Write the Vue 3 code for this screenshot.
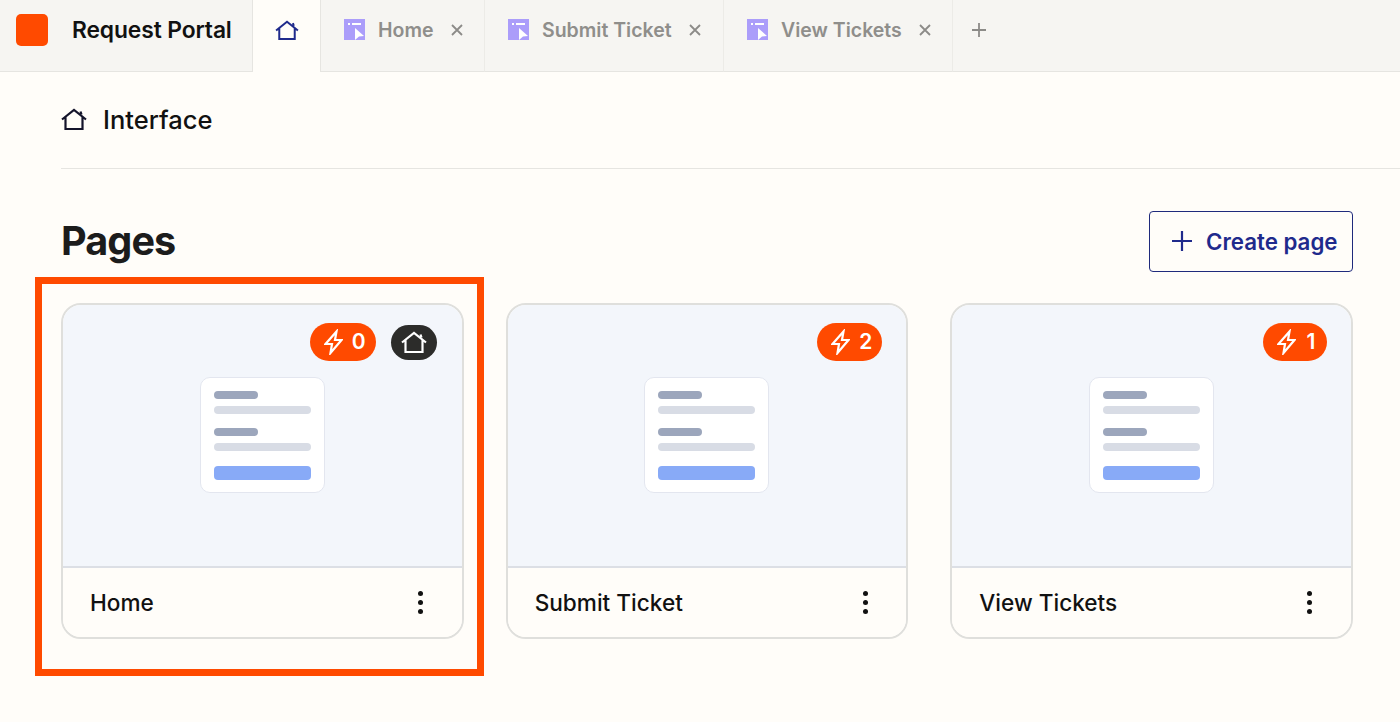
<script setup>
const tabs = [
  { name: 'Home', w: 164 },
  { name: 'Submit Ticket', w: 239 },
  { name: 'View Tickets', w: 229 },
]
const pages = [
  { name: 'Home', runs: 0, home: true },
  { name: 'Submit Ticket', runs: 2, home: false },
  { name: 'View Tickets', runs: 1, home: false },
]
const housePath = 'M1 11.5 L13 2 L25 11.5 M4.5 9 V21 H21.5 V9 M19.5 3.5 L20.5 6.5'
</script>

<template>
  <div class="app">
    <header class="tabbar">
      <div class="brand">
        <span class="logo"></span>
        <span class="brand-name">Request Portal</span>
      </div>
      <div class="tab-active">
        <svg width="24" height="20" viewBox="0 0 26 22" fill="none" stroke="#1f2a8c" stroke-width="2.2">
          <path :d="housePath" />
        </svg>
      </div>
      <div v-for="t in tabs" :key="t.name" class="tab" :style="{ width: t.w + 'px' }">
        <svg class="tab-icon" width="21" height="21" viewBox="0 0 21 21">
          <rect width="21" height="21" fill="#ab9dfa" />
          <rect x="4" y="4" width="2" height="2" fill="#fff" />
          <rect x="8" y="4" width="9" height="2" fill="#fff" />
          <path d="M11 9 L20 17 L15 17.5 L11 21 Z" fill="#fff" />
        </svg>
        <span class="tab-name">{{ t.name }}</span>
        <svg class="tab-x" width="14" height="14" viewBox="0 0 14 14" stroke="#8c8b88" stroke-width="1.8" fill="none">
          <path d="M2 2 L12 12 M12 2 L2 12" />
        </svg>
      </div>
      <div class="tab-add">
        <svg width="16" height="16" viewBox="0 0 16 16" stroke="#8c8b88" stroke-width="1.8" fill="none">
          <path d="M8 1 V15 M1 8 H15" />
        </svg>
      </div>
      <div class="tab-fill"></div>
    </header>

    <main class="content">
      <div class="crumb">
        <svg width="26" height="22" viewBox="0 0 26 22" fill="none" stroke="#14142b" stroke-width="2.2">
          <path :d="housePath" />
        </svg>
        <span>Interface</span>
      </div>

      <div class="title-row">
        <h1>Pages</h1>
        <button class="create">
          <svg width="22" height="22" viewBox="0 0 22 22" stroke="#1f2a8c" stroke-width="2.2" fill="none">
            <path d="M11 1 V21 M1 11 H21" />
          </svg>
          <span>Create page</span>
        </button>
      </div>

      <div class="grid">
        <article v-for="p in pages" :key="p.name" class="card">
          <div class="preview">
            <div class="badges">
              <span class="runs">
                <svg width="19" height="26" viewBox="0 0 19 26" fill="none" stroke="#fff" stroke-width="2.2" stroke-linejoin="miter">
                  <path d="M12.5 2.5 L1.5 15 H8 L6.5 24 L17.5 11 H11 Z" />
                </svg>
                <span class="num">{{ p.runs }}</span>
              </span>
              <span v-if="p.home" class="home-badge">
                <svg width="26" height="22" viewBox="0 0 26 22" fill="none" stroke="#fff" stroke-width="2.2">
                  <path :d="housePath" />
                </svg>
              </span>
            </div>
            <div class="mini">
              <i class="l-dark"></i>
              <i class="l-light"></i>
              <i class="l-dark second"></i>
              <i class="l-light"></i>
              <i class="l-blue"></i>
            </div>
          </div>
          <div class="foot">
            <span>{{ p.name }}</span>
            <span class="dots"><i></i><i></i><i></i></span>
          </div>
        </article>
      </div>
    </main>

    <div class="highlight"></div>
  </div>
</template>

<style>
html, body { margin: 0; background: #fffdf9; }
</style>

<style scoped>
.app {
  position: relative;
  width: 1400px;
  height: 722px;
  overflow: hidden;
  background: #fffdf9;
  font-family: Inter, "Liberation Sans", sans-serif;
  color: #111;
}
.tabbar {
  display: flex;
  height: 72px;
  background: #f6f5f2;
}
.brand {
  width: 253px;
  display: flex;
  align-items: center;
  padding: 0 0 12px 16px;
  box-sizing: border-box;
  border-bottom: 1px solid #e6e5e1;
  border-right: 1px solid #e6e5e1;
}
.logo {
  width: 32px;
  height: 32px;
  border-radius: 5px;
  background: #ff4a00;
}
.brand-name {
  margin-left: 24px;
  font-size: 22.8px;
  font-weight: 600;
  letter-spacing: -0.1px;
  white-space: nowrap;
}
.tab-active {
  width: 68px;
  box-sizing: border-box;
  background: #fffdf9;
  display: flex;
  justify-content: center;
  align-items: flex-start;
  padding-top: 20px;
  border-right: 1px solid #e6e5e1;
}
.tab {
  box-sizing: border-box;
  display: flex;
  align-items: center;
  padding: 0 0 12px 23px;
  border-right: 1.5px solid #ecebe7;
  border-bottom: 1px solid #e6e5e1;
}
.tab-name {
  margin-left: 13px;
  font-size: 19.5px;
  font-weight: 600;
  color: #8f8e8b;
  white-space: nowrap;
}
.tab-x { margin-left: 16.5px; }
.tab-add {
  width: 52px;
  display: flex;
  justify-content: center;
  align-items: center;
  padding-bottom: 12px;
  box-sizing: border-box;
  border-bottom: 1px solid #e6e5e1;
}
.tab-fill {
  flex: 1;
  border-bottom: 1px solid #e6e5e1;
}
.content {
  padding: 0 47px 0 61px;
}
.crumb {
  height: 97px;
  box-sizing: border-box;
  margin-right: -47px;
  border-bottom: 1px solid #e6e5e1;
  display: flex;
  align-items: center;
  gap: 16px;
  font-size: 25.5px;
  font-weight: 500;
  padding-bottom: 2px;
}
.title-row {
  display: flex;
  justify-content: space-between;
  align-items: flex-start;
  padding-top: 42px;
  height: 134px;
  box-sizing: border-box;
}
h1 {
  margin: 0;
  font-size: 39.6px;
  line-height: 60px;
  font-weight: 700;
  letter-spacing: -0.9px;
  color: #1c1c1c;
}
.create {
  width: 204px;
  height: 61px;
  box-sizing: border-box;
  display: flex;
  align-items: center;
  gap: 13px;
  padding: 0 0 1px 21px;
  border: 1.5px solid #1f2a7c;
  border-radius: 4px;
  background: #fffdf9;
  color: #1f2a8c;
  font-family: inherit;
  font-size: 22.3px;
  font-weight: 600;
  white-space: nowrap;
}
.grid {
  display: grid;
  grid-template-columns: repeat(3, 1fr);
  gap: 42px;
}
.card {
  height: 336px;
  box-sizing: border-box;
  border: 2px solid #dfdfdc;
  border-radius: 20px;
  overflow: hidden;
  display: flex;
  flex-direction: column;
}
.preview {
  position: relative;
  height: 263px;
  box-sizing: border-box;
  background: #f3f6fb;
  border-bottom: 2px solid #dcdfe5;
  display: flex;
  justify-content: center;
  padding-top: 72px;
}
.badges {
  position: absolute;
  top: 18px;
  right: 24px;
  display: flex;
  align-items: center;
  gap: 15px;
}
.runs {
  height: 38px;
  box-sizing: border-box;
  padding: 0 10px 1px 14px;
  border-radius: 19px;
  background: #ff4a00;
  color: #fff;
  font-size: 21px;
  font-weight: 600;
  display: flex;
  align-items: center;
  gap: 9px;
}
.num {
  min-width: 12px;
  text-align: center;
}
.home-badge {
  width: 46px;
  height: 35px;
  margin-right: 1px;
  border-radius: 18px;
  background: #2c2c2a;
  display: flex;
  align-items: center;
  justify-content: center;
}
.mini {
  width: 125px;
  height: 116px;
  box-sizing: border-box;
  background: #fff;
  border: 1.5px solid #e3e6ef;
  border-radius: 10px;
  padding: 13px 13px 0;
  display: flex;
  flex-direction: column;
}
.mini i { display: block; }
.l-dark {
  width: 44px;
  height: 8px;
  border-radius: 4px;
  background: #9ca6bc;
}
.second { margin-top: 14px; }
.l-light {
  height: 8px;
  margin-top: 7px;
  border-radius: 4px;
  background: #d8dce5;
}
.l-blue {
  height: 14px;
  margin-top: 15px;
  border-radius: 4px;
  background: #88aaf7;
}
.foot {
  flex: 1;
  display: flex;
  align-items: center;
  justify-content: space-between;
  padding: 0 38.5px 1px 27px;
  font-size: 22.6px;
  font-weight: 500;
  background: #fffdf9;
}
.dots {
  display: flex;
  flex-direction: column;
  gap: 4px;
}
.dots i {
  width: 5px;
  height: 5px;
  border-radius: 50%;
  background: #111;
}
.highlight {
  position: absolute;
  left: 35px;
  top: 277px;
  width: 449px;
  height: 399px;
  box-sizing: border-box;
  border: 7px solid #ff4a00;
  pointer-events: none;
}
</style>
